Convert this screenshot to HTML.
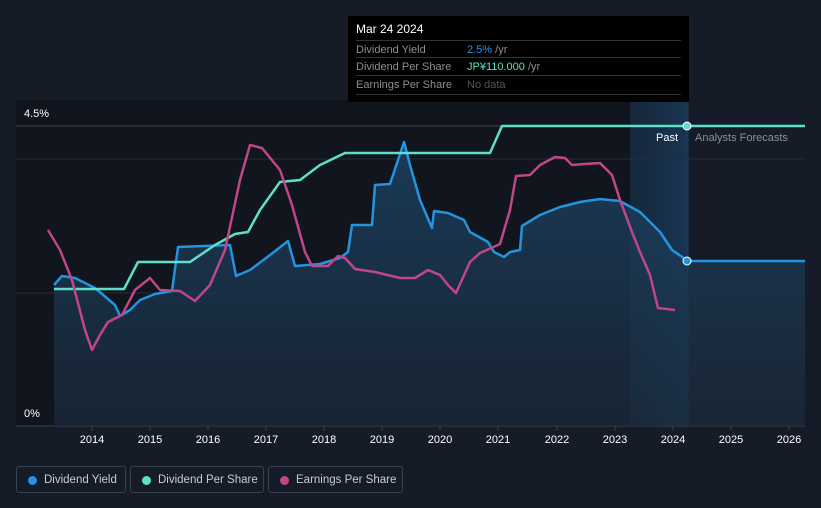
<!DOCTYPE html>
<html><head><meta charset="utf-8"><style>
html,body{margin:0;width:821px;height:508px;overflow:hidden}
body{background:#151b27;font-family:"Liberation Sans",sans-serif;position:relative}
.t{position:absolute;color:#fff;font-size:11px}
.lg{position:absolute;top:466px;height:27px;border:1px solid #3a404b;border-radius:3px;color:#c9ccd1;font-size:11.5px;line-height:26px;box-sizing:border-box;white-space:nowrap}
.lg i{position:absolute;left:11px;top:9px;width:9px;height:9px;border-radius:50%}
.lg span{position:absolute;left:27px}
.tt{position:absolute;left:348px;top:16px;width:341px;height:86px;background:#000;font-size:11px}
.tt .r{position:absolute;left:8px;right:8px;height:18px;border-top:1px solid #333;line-height:18px;color:#8d8f93}
.tt .r b{font-weight:normal;position:absolute;left:111px}
</style></head><body>
<svg width="821" height="508" style="position:absolute;left:0;top:0">
<defs><linearGradient id="g" x1="0" y1="0" x2="0" y2="1"><stop offset="0" stop-color="#1c4466" stop-opacity=".8"/><stop offset="1" stop-color="#1b2a3b" stop-opacity=".7"/></linearGradient>
<linearGradient id="f" x1="0" y1="0" x2="1" y2="0"><stop offset="0" stop-color="#16273a"/><stop offset="1" stop-color="#183552"/></linearGradient></defs>
<rect x="16" y="100" width="672" height="326" fill="#10151e"/>
<rect x="630" y="100" width="58" height="326" fill="url(#f)"/>
<line x1="16" y1="126" x2="805" y2="126" stroke="#3b414c"/>
<line x1="16" y1="159" x2="805" y2="159" stroke="#262c37"/>
<line x1="16" y1="293" x2="805" y2="293" stroke="#262c37"/>
<line x1="16" y1="426" x2="805" y2="426" stroke="#3b414c"/>
<line x1="688" y1="100" x2="688" y2="426" stroke="#1d3e5c"/>
<path d="M54,285 L62,276 75,278 95,288 115,305 120,316 130,310 140,300 155,294 172,291 178,247 230,245 236,276 250,270 270,255 288,241 295,266 320,264 340,258 348,252 352,225 372,225 375,185 390,184 398,160 404,142 410,165 420,200 432,228 434,211 448,213 464,220 470,232 488,242 494,252 504,257 510,252 520,250 522,226 540,215 560,207 580,202 600,199 620,201 640,212 660,232 672,250 688,261 805,261 L805,426 L54,426Z" fill="url(#g)"/>
<g fill="none" stroke-width="2.5" stroke-linejoin="round">
<path d="M54,285 L62,276 75,278 95,288 115,305 120,316 130,310 140,300 155,294 172,291 178,247 230,245 236,276 250,270 270,255 288,241 295,266 320,264 340,258 348,252 352,225 372,225 375,185 390,184 398,160 404,142 410,165 420,200 432,228 434,211 448,213 464,220 470,232 488,242 494,252 504,257 510,252 520,250 522,226 540,215 560,207 580,202 600,199 620,201 640,212 660,232 672,250 688,261 805,261" stroke="#2394df"/>
<path d="M54,289 L124,289 138,262 190,262 215,245 235,234 248,232 260,210 280,182 300,180 320,165 345,153 490,153 502,126 805,126" stroke="#5ee0c8"/>
<path d="M48,230 L60,250 72,280 85,330 92,350 100,335 108,322 122,315 135,290 150,278 160,290 180,291 195,301 210,285 225,250 240,180 250,145 262,148 280,170 292,205 305,252 312,266 328,266 338,256 345,258 355,269 375,272 400,278 415,278 428,270 440,275 448,285 456,293 470,262 480,253 500,244 510,210 516,176 530,175 540,165 555,157 565,158 572,165 585,164 600,163 612,175 620,200 632,232 640,252 650,275 658,308 675,310" stroke="#c0468a"/>
</g>
<circle cx="687" cy="126" r="4" fill="#5ee0c8" stroke="#fff" stroke-width="1"/>
<circle cx="687" cy="261" r="4" fill="#2394df" stroke="#fff" stroke-width="1"/>
<g stroke="#3b414c"><line x1="92" y1="426" x2="92" y2="431"/><line x1="150" y1="426" x2="150" y2="431"/><line x1="208" y1="426" x2="208" y2="431"/><line x1="266" y1="426" x2="266" y2="431"/><line x1="324" y1="426" x2="324" y2="431"/><line x1="382" y1="426" x2="382" y2="431"/><line x1="440" y1="426" x2="440" y2="431"/><line x1="498" y1="426" x2="498" y2="431"/><line x1="557" y1="426" x2="557" y2="431"/><line x1="615" y1="426" x2="615" y2="431"/><line x1="673" y1="426" x2="673" y2="431"/><line x1="731" y1="426" x2="731" y2="431"/><line x1="789" y1="426" x2="789" y2="431"/></g>
<g fill="#fff" font-size="11" text-anchor="middle" font-family="Liberation Sans,sans-serif"><text x="92" y="443">2014</text><text x="150" y="443">2015</text><text x="208" y="443">2016</text><text x="266" y="443">2017</text><text x="324" y="443">2018</text><text x="382" y="443">2019</text><text x="440" y="443">2020</text><text x="498" y="443">2021</text><text x="557" y="443">2022</text><text x="615" y="443">2023</text><text x="673" y="443">2024</text><text x="731" y="443">2025</text><text x="789" y="443">2026</text></g>
</svg>
<div class="t" style="left:24px;top:108px">4.5%</div>
<div class="t" style="left:24px;top:408px">0%</div>
<div class="t" style="left:656px;top:132px">Past</div>
<div class="t" style="left:695px;top:132px;color:#8d9096">Analysts Forecasts</div>
<div class="tt">
<div style="position:absolute;left:8px;top:6px;color:#fff;font-size:12px">Mar 24 2024</div>
<div class="r" style="top:24px">Dividend Yield<b><span style="color:#2394df">2.5%</span> /yr</b></div>
<div class="r" style="top:41px">Dividend Per Share<b><span style="color:#5ee0c8">JP¥110.000</span> /yr</b></div>
<div class="r" style="top:59px;border-bottom:1px solid #333">Earnings Per Share<b style="color:#555">No data</b></div>
</div>
<div class="lg" style="left:16px;width:110px"><i style="background:#2394df"></i><span>Dividend Yield</span></div>
<div class="lg" style="left:130px;width:134px"><i style="background:#5ee0c8"></i><span>Dividend Per Share</span></div>
<div class="lg" style="left:268px;width:135px"><i style="background:#c0468a"></i><span>Earnings Per Share</span></div>
</body></html>
